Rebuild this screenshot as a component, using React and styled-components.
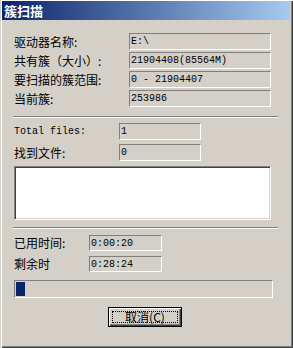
import React from "react";
import styled, { createGlobalStyle } from "styled-components";

const GlobalStyle = createGlobalStyle`
  html, body {
    margin: 0;
    padding: 0;
    background: #d4d0c8;
  }
`;

const Window = styled.div`
  width: 293px;
  height: 348px;
  box-sizing: border-box;
  padding: 1px 3px 3px 2px;
  background: #d4d0c8;
  box-shadow: inset 1px 0 #d4d0c8, inset 2px 0 #ffffff, inset 0 1px #ffffff,
    inset -1px -1px #404040, inset -2px -2px #808080;
  font-family: "Noto Sans CJK SC", "Liberation Sans", sans-serif;
  font-size: 12px;
  color: #000;
  display: flex;
  flex-direction: column;
`;

const TitleBar = styled.div`
  height: 19px;
  display: flex;
  align-items: center;
  padding-left: 2px;
  background: linear-gradient(to right, #0a246a, #a6caf0);
  color: #fff;
  font-weight: bold;
  font-size: 13px;
  letter-spacing: 0px;
`;

const Body = styled.div`
  padding: 0 0 0 12px;
  display: flex;
  flex-direction: column;
`;

const FieldGrid = styled.div`
  display: grid;
  grid-template-columns: ${(p) => p.$label}px ${(p) => p.$field}px;
  grid-auto-rows: ${(p) => p.$row}px;
  row-gap: ${(p) => p.$gap}px;
  margin-top: ${(p) => p.$top}px;
  align-items: center;
`;

const Label = styled.span`
  font-family: ${(p) =>
    p.$mono
      ? '"Liberation Mono", monospace'
      : '"Noto Sans CJK SC", "Liberation Sans", sans-serif'};
  font-size: ${(p) => (p.$mono ? "10px" : "12px")};
  line-height: 14px;
  white-space: nowrap;
`;

const Field = styled.div`
  height: 100%;
  box-sizing: border-box;
  border-top: 1px solid #808080;
  border-left: 1px solid #808080;
  border-bottom: 1px solid #ffffff;
  border-right: 1px solid #ffffff;
  padding-left: 1px;
  display: flex;
  align-items: center;
  font-family: "Liberation Mono", monospace;
  font-size: 10px;
  white-space: pre;
`;

const Separator = styled.div`
  margin-top: ${(p) => p.$top}px;
  margin-left: -1px;
  width: 265px;
  height: 0;
  border-top: 1px solid #808080;
  border-bottom: 1px solid #ffffff;
`;

const ListBox = styled.div`
  margin-top: 5px;
  width: 257px;
  height: 54px;
  box-sizing: border-box;
  background: #ffffff;
  border-top: 1px solid #808080;
  border-left: 1px solid #808080;
  border-bottom: 1px solid #ffffff;
  border-right: 1px solid #ffffff;
  box-shadow: inset 1px 1px #404040, inset -1px -1px #d4d0c8;
`;

const Progress = styled.div`
  margin-top: 8px;
  width: 259px;
  height: 18px;
  box-sizing: border-box;
  padding: 1px;
  border-top: 1px solid #808080;
  border-left: 1px solid #808080;
  border-bottom: 1px solid #ffffff;
  border-right: 1px solid #ffffff;
  display: flex;
`;

const ProgressBlock = styled.div`
  width: 9px;
  height: 100%;
  background: #0a246a;
`;

const ButtonRow = styled.div`
  margin-top: 9px;
  padding-left: 94px;
  display: flex;
`;

const Button = styled.button`
  width: 74px;
  height: 20px;
  box-sizing: border-box;
  margin: 0;
  padding: 0;
  background: #d4d0c8;
  border: 1px solid #000;
  box-shadow: inset 1px 1px #ffffff, inset -1px -1px #404040,
    inset -2px -2px #808080;
  font-family: "Noto Sans CJK SC", "Liberation Sans", sans-serif;
  font-size: 12px;
  color: #000;
  display: flex;
  align-items: stretch;
  justify-content: stretch;
  padding: 3px;
`;

const FocusRing = styled.span`
  flex: 1;
  border: 1px dotted #000;
  display: flex;
  align-items: center;
  justify-content: center;
  line-height: 12px;
`;

export default function App() {
  return (
    <>
      <GlobalStyle />
      <Window>
        <TitleBar>簇扫描</TitleBar>
        <Body>
          <FieldGrid $label={115} $field={142} $row={17} $gap={2} $top={13}>
            <Label>驱动器名称:</Label>
            <Field>E:\</Field>
            <Label>共有簇（大小）:</Label>
            <Field>21904408(85564M)</Field>
            <Label>要扫描的簇范围:</Label>
            <Field>0 - 21904407</Field>
            <Label>当前簇:</Label>
            <Field>253986</Field>
          </FieldGrid>
          <Separator $top={9} />
          <FieldGrid $label={105} $field={82} $row={17} $gap={4} $top={5}>
            <Label $mono>Total files:</Label>
            <Field>1</Field>
            <Label>找到文件:</Label>
            <Field>0</Field>
          </FieldGrid>
          <ListBox />
          <Separator $top={7} />
          <FieldGrid $label={75} $field={73} $row={16} $gap={5} $top={6}>
            <Label>已用时间:</Label>
            <Field>0:00:20</Field>
            <Label>剩余时</Label>
            <Field>0:28:24</Field>
          </FieldGrid>
          <Progress>
            <ProgressBlock />
          </Progress>
          <ButtonRow>
            <Button>
              <FocusRing>取消(C)</FocusRing>
            </Button>
          </ButtonRow>
        </Body>
      </Window>
    </>
  );
}
